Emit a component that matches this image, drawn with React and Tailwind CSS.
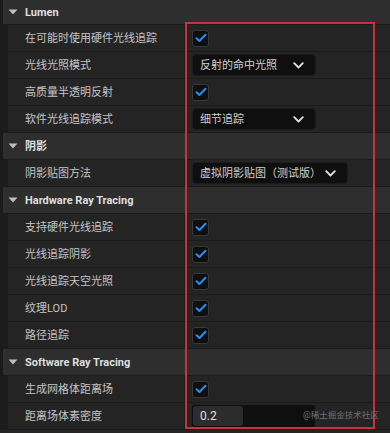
import React from "react";

const FONT = { fontFamily: 'Roboto, "Noto Sans CJK SC", sans-serif' };

function Check() {
  return (
    <div className="w-[17px] h-[17px] rounded-[3px] bg-[#0f0f0f] border border-[#383838] flex items-center justify-center">
      <svg width="12" height="10" viewBox="0 0 12 10">
        <path d="M1.5 5.2 L4.5 8 L10.5 1.8" fill="none" stroke="#2b8cf0" strokeWidth="2" strokeLinecap="round" strokeLinejoin="round" />
      </svg>
    </div>
  );
}

function Chevron() {
  return (
    <svg width="11" height="7" viewBox="0 0 11 7" className="shrink-0">
      <path d="M1.2 1.2 L5.5 5.5 L9.8 1.2" fill="none" stroke="#e0e0e0" strokeWidth="1.8" strokeLinecap="round" strokeLinejoin="round" />
    </svg>
  );
}

function Select({ label, w }) {
  return (
    <div className={`${w} h-[22px] rounded-[4px] bg-[#0f0f0f] border border-[#1c1c1c] flex items-center justify-between pl-[7px] pr-[11px] whitespace-nowrap`}>
      <span className="text-[11px] text-[#d0d0d0] leading-none">{label}</span>
      <Chevron />
    </div>
  );
}

function Header({ title, first }) {
  return (
    <div className={`flex ${first ? "h-[25px]" : "h-[27px]"} bg-[#2e2e2e] border-b border-[#1b1b1b]`}>
      <div className="w-[3px] bg-[#1a1a1a]" />
      <div className="flex items-center pl-[5px]">
        <svg width="10" height="6" viewBox="0 0 10 6" className="mr-[7px]">
          <path d="M0.5 0.5 L9.5 0.5 L5 5.5 Z" fill="#bdbdbd" />
        </svg>
        <span className="text-[11px] font-bold text-[#dedede] leading-none">{title}</span>
      </div>
    </div>
  );
}

function Row({ label, children }) {
  return (
    <div className="flex h-[27px] bg-[#242424] border-b border-[#1b1b1b]">
      <div className="w-[8px] bg-[#1c1c1c]" />
      <div className="w-[177px] flex items-center pl-[17px] border-r border-[#1b1b1b]">
        <span className="text-[11px] text-[#c4c4c4] leading-none whitespace-nowrap">{label}</span>
      </div>
      <div className="flex-1 flex items-center pl-[7px]">{children}</div>
    </div>
  );
}

export default function App() {
  return (
    <div className="relative w-[390px] h-[433px] bg-[#242424] overflow-hidden" style={FONT}>
      <Header title="Lumen" first />
      <Row label="在可能时使用硬件光线追踪"><Check /></Row>
      <Row label="光线光照模式"><Select label="反射的命中光照" w="w-[124px]" /></Row>
      <Row label="高质量半透明反射"><Check /></Row>
      <Row label="软件光线追踪模式"><Select label="细节追踪" w="w-[124px]" /></Row>
      <Header title="阴影" />
      <Row label="阴影贴图方法"><Select label="虚拟阴影贴图（测试版）" w="w-[156px]" /></Row>
      <Header title="Hardware Ray Tracing" />
      <Row label="支持硬件光线追踪"><Check /></Row>
      <Row label="光线追踪阴影"><Check /></Row>
      <Row label="光线追踪天空光照"><Check /></Row>
      <Row label="纹理LOD"><Check /></Row>
      <Row label="路径追踪"><Check /></Row>
      <Header title="Software Ray Tracing" />
      <Row label="生成网格体距离场"><Check /></Row>
      <Row label="距离场体素密度">
        <div className="w-[123px] h-[22px] rounded-[3px] bg-[#0f0f0f] flex p-[1px]">
          <div className="w-[50px] h-full rounded-[3px] bg-[#2c2c2c] flex items-center pl-[7px]">
            <span className="text-[12px] text-[#e0e0e0] leading-none">0.2</span>
          </div>
        </div>
      </Row>
      <div className="absolute left-[185px] top-[22px] w-[190px] h-[407px] border-2 border-[#cf2f3b] pointer-events-none" />
      <div className="absolute left-[303px] top-[411px] text-[8.5px] text-[#707070] leading-none whitespace-nowrap">@稀土掘金技术社区</div>
    </div>
  );
}
